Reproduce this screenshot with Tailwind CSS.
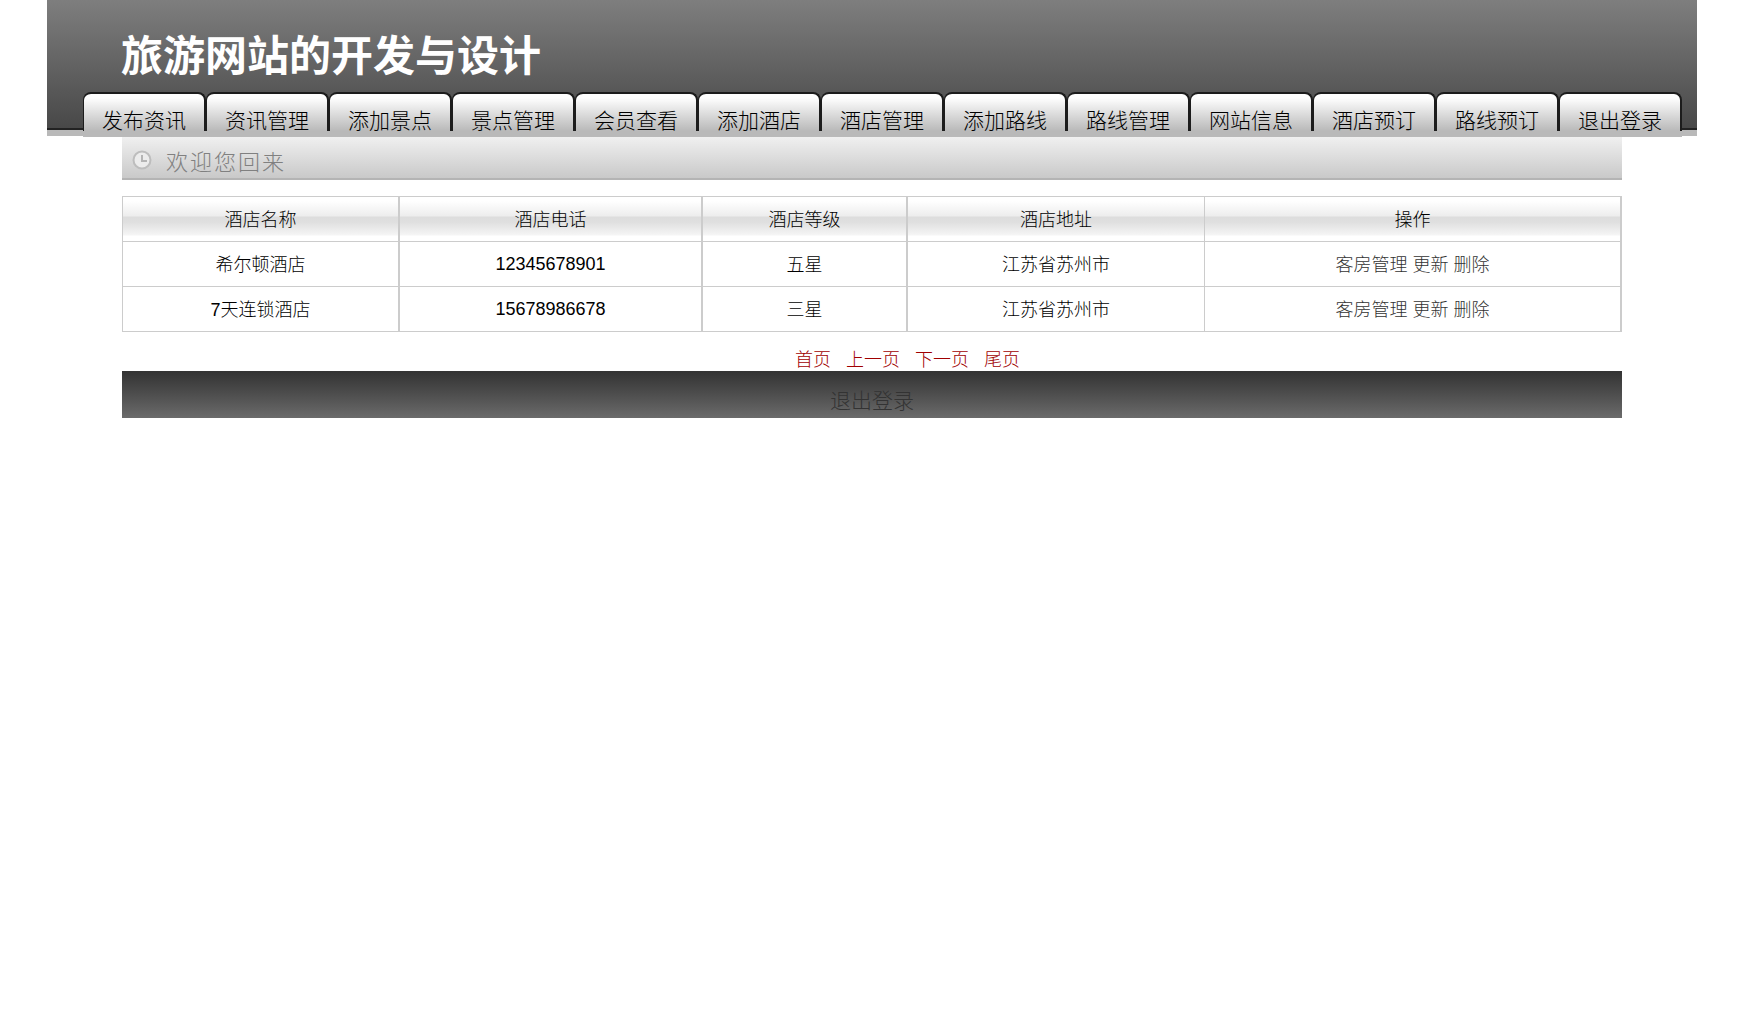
<!DOCTYPE html>
<html lang="zh-CN">
<head>
  <meta charset="UTF-8">
  <meta name="viewport" content="width=device-width, initial-scale=1.0"/>
  <title>旅游网站的开发与设计</title>
  <script src="https://cdn.jsdelivr.net/npm/@tailwindcss/browser@4"></script>
</head>
<body class="bg-white pr-px text-black text-lg font-light font-['Liberation_Sans','Noto_Sans_CJK_SC',sans-serif]">
  <!-- header with tabs -->
  <header class="max-w-[1650px] mx-auto flow-root bg-[linear-gradient(to_bottom,#7e7e7e,#484848_128px,#222_128px,#222_130px,#b9b9b9_130px)]">
    <h1 class="h-[92px] pt-[27px] pl-[74px] text-[42px] leading-[60px] font-bold text-white">旅游网站的开发与设计</h1>
    <nav class="-mb-px pl-9 pr-[15px]">
      <ul id="tabs" class="flex h-[45px] bg-[linear-gradient(to_bottom,transparent_39px,#b9b9b9_39px)] text-[21px] leading-[30px]"></ul>
    </nav>
  </header>

  <main class="max-w-[1500px] mx-auto pt-px">
    <!-- welcome bar -->
    <div class="flex items-center h-[43px] pl-[10px] gap-[14px] border-b-2 border-[#b4b4b4] bg-linear-to-b from-[#f0f0f0] to-[#c9c9c9]">
      <svg class="size-5 mt-1" viewBox="0 0 20 20" fill="none">
        <circle cx="10" cy="10" r="8.5" fill="#ececec" stroke="#bdbdbd" stroke-width="2"/>
        <path d="M10 5v6h5" stroke="#b4b4b4" stroke-width="2"/>
      </svg>
      <p class="pt-[10px] text-[22px] leading-[30px] tracking-[2px] text-[#808080]">欢迎您回来</p>
    </div>

    <table class="mt-4 w-full table-fixed border-separate border-spacing-0 border-t border-l border-[#ccc] text-center">
      <colgroup>
        <col class="w-[277px]">
        <col class="w-[303px]">
        <col class="w-[205px]">
        <col class="w-[297px]">
        <col class="w-[417px]">
      </colgroup>
      <thead>
        <tr class="h-[45px] bg-[linear-gradient(to_bottom,#fff_4px,#ededed_19px,#dddddd_20px,#dfdfdf_25px,#f5f5f5_38px,#fff_39px)]">
          <th class="pt-[2px] border-b border-r-2 border-[#ccc] font-light">酒店名称</th>
          <th class="pt-[2px] border-b border-r-2 border-[#ccc] font-light">酒店电话</th>
          <th class="pt-[2px] border-b border-r-2 border-[#ccc] font-light">酒店等级</th>
          <th class="pt-[2px] border-b border-r border-[#ccc] font-light">酒店地址</th>
          <th class="pt-[2px] border-b border-r-2 border-[#ccc] font-light">操作</th>
        </tr>
      </thead>
      <tbody id="hotels"></tbody>
    </table>

    <div class="flex justify-center gap-[15px] pt-[17px] pl-[71px] leading-[22px] text-[#a00000]">
      <a href="#">首页</a>
      <a href="#">上一页</a>
      <a href="#">下一页</a>
      <a href="#">尾页</a>
    </div>
  </main>

  <footer class="max-w-[1500px] h-[47px] mx-auto pt-[15px] text-center text-[21px] leading-[30px] text-[#333] bg-linear-to-b from-[#333] to-[#6b6b6b]">
    <a href="#">退出登录</a>
  </footer>

  <script>
    const tabs = ["发布资讯", "资讯管理", "添加景点", "景点管理", "会员查看", "添加酒店", "酒店管理", "添加路线", "路线管理", "网站信息", "酒店预订", "路线预订", "退出登录"];
    const hotels = [
      { name: "希尔顿酒店", tel: "12345678901", level: "五星", address: "江苏省苏州市" },
      { name: "7天连锁酒店", tel: "15678986678", level: "三星", address: "江苏省苏州市" }
    ];

    document.getElementById("tabs").innerHTML = tabs.map(t => `<li class="flex-1">
      <a href="#" class="block h-[39px] pt-3 border-t-2 border-l border-r-2 border-[#1c1c1c] rounded-t-lg bg-linear-to-b from-white from-10% to-[#b9b9b9] text-center whitespace-nowrap">${t}</a>
    </li>`).join("");

    document.getElementById("hotels").innerHTML = hotels.map(h => `<tr class="h-[45px]">
      <td class="pt-[2px] border-b border-r-2 border-[#ccc]">${h.name}</td>
      <td class="border-b border-r-2 border-[#ccc]">${h.tel}</td>
      <td class="pt-[2px] border-b border-r-2 border-[#ccc]">${h.level}</td>
      <td class="pt-[2px] border-b border-r border-[#ccc]">${h.address}</td>
      <td class="pt-[2px] border-b border-r-2 border-[#ccc] text-[#333]"><a href="#">客房管理</a> <a href="#">更新</a> <a href="#">删除</a></td>
    </tr>`).join("");
  </script>
</body>
</html>
